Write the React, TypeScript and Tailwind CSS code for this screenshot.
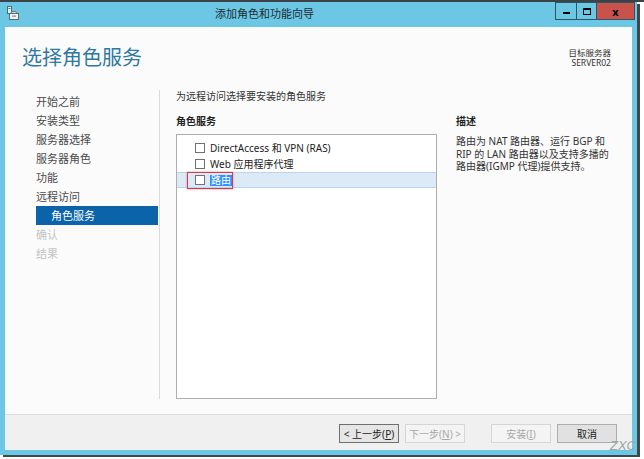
import React from "react";

const navItems = [
  { label: "开始之前", state: "done" },
  { label: "安装类型", state: "done" },
  { label: "服务器选择", state: "done" },
  { label: "服务器角色", state: "done" },
  { label: "功能", state: "done" },
  { label: "远程访问", state: "done" },
  { label: "角色服务", state: "active" },
  { label: "确认", state: "off" },
  { label: "结果", state: "off" },
];

function TitleIcon() {
  return (
    <svg width="12" height="14" viewBox="0 0 12 14" className="mt-[4px]">
      <rect x="0.5" y="0.5" width="4" height="7" fill="#e8f4fa" stroke="#3d6f8a" />
      <rect x="1.5" y="2" width="2" height="1" fill="#3d6f8a" />
      <path d="M3.5 7.5 L5 5.5 L9 5.5 L10.5 7.5 Z" fill="#cfd8dc" stroke="#5a6b73" strokeWidth="0.8" />
      <rect x="2.5" y="7.5" width="9" height="6" fill="#f2f4f5" stroke="#5a6b73" />
      <rect x="5" y="9.5" width="4" height="1.2" fill="#7a8a92" />
    </svg>
  );
}

function CheckBox() {
  return <span className="w-[10px] h-[10px] border border-[#707070] bg-white shrink-0" />;
}

function App() {
  return (
    <div className="w-[644px] h-[459px] bg-white overflow-hidden flex flex-col font-['Noto_Sans','Noto_Sans_CJK_SC',sans-serif] relative">
      <div className="h-[2px] bg-[#3b4348] shrink-0" />
      <div className="w-[637px] h-[453px] bg-[#6cc7e5] flex flex-col shadow-[3px_2px_0_#40484c]">
        {/* title bar */}
        <div className="h-[25px] flex items-start shrink-0 relative">
          <div className="pl-[7px]">
            <TitleIcon />
          </div>
          <div className="ml-[196px] mt-[5px] text-[11px] leading-[14px] text-[#1d2a30]">添加角色和功能向导</div>
          <div className="ml-auto mr-[2px] flex">
            <div className="w-[22px] h-[18px] border border-[#2e5566] flex items-end justify-center pb-[5px]">
              <span className="w-[7px] h-[2px] bg-black" />
            </div>
            <div className="w-[20px] h-[18px] border-y border-r border-[#2e5566] flex items-center justify-center">
              <span className="w-[8px] h-[7px] border border-black border-t-2" />
            </div>
            <div className="w-[38px] h-[18px] border-y border-r border-[#2e5566] bg-[#c9534b] flex items-center justify-center text-[11px] font-bold leading-none text-black">
              x
            </div>
          </div>
        </div>

        {/* body */}
        <div className="flex-1 px-[5px] pb-[5px] flex flex-col">
          <div className="flex-1 flex flex-col bg-[#fbfbfb]">
            <div className="h-[387px] flex flex-col">
              <div className="flex justify-between items-start pt-[19px]">
                <div className="pl-[17px] text-[20px] leading-[24px] text-[#2e78a4]">选择角色服务</div>
                <div className="pr-[21px] pt-[2px] text-right text-[8.5px] leading-[10px] text-[#333]">
                  <div>目标服务器</div>
                  <div>SERVER02</div>
                </div>
              </div>

              <div className="mt-[20px] h-[309px] flex">
                {/* nav */}
                <div className="w-[154px] pl-[31px] pr-[1px] pt-[2px] flex flex-col">
                  {navItems.map((item) =>
                    item.state === "active" ? (
                      <div key={item.label} className="h-[19px] leading-[19px] text-[11px] bg-[#0b63aa] text-white pl-[15px]">
                        {item.label}
                      </div>
                    ) : (
                      <div
                        key={item.label}
                        className={
                          item.state === "off"
                            ? "h-[19px] leading-[19px] text-[11px] text-[#c4c4c4]"
                            : "h-[19px] leading-[19px] text-[11px] text-[#4a4a4a]"
                        }
                      >
                        {item.label}
                      </div>
                    )
                  )}
                </div>
                <div className="w-[1px] bg-[#dadada]" />

                {/* main */}
                <div className="pl-[16px] flex">
                  <div className="w-[261px] flex flex-col">
                    <div className="text-[10px] leading-[12px] text-[#333]">为远程访问选择要安装的角色服务</div>
                    <div className="mt-[13px] text-[10px] leading-[12px] font-bold text-[#222]">角色服务</div>
                    <div className="mt-[7px] flex-1 border border-[#adadad] bg-white pt-[5px] text-[10px] text-[#222]">
                      <div className="h-[16px] flex items-center pl-[18px] gap-[5px]">
                        <CheckBox />
                        <span>DirectAccess 和 VPN (RAS)</span>
                      </div>
                      <div className="h-[16px] flex items-center pl-[18px] gap-[5px]">
                        <CheckBox />
                        <span>Web 应用程序代理</span>
                      </div>
                      <div className="h-[16px] flex items-center pl-[18px] gap-[5px] bg-[#dce9f7] border-y border-[#bcd4ee] relative">
                        <CheckBox />
                        <span className="bg-[#3390ff] text-white px-[1px] leading-[11px]">路由</span>
                        <div className="absolute left-[10px] top-[-1px] w-[46px] h-[17px] border-[1.5px] border-[#d23c4c] shadow-[0_0_2px_#e08a94]" />
                      </div>
                    </div>
                  </div>
                  <div className="ml-[19px] flex flex-col">
                    <div className="mt-[25px] text-[10px] leading-[12px] font-bold text-[#222]">描述</div>
                    <div className="mt-[8px] text-[10px] leading-[12.5px] text-[#333] whitespace-nowrap">
                      路由为 NAT 路由器、运行 BGP 和<br />
                      RIP 的 LAN 路由器以及支持多播的<br />
                      路由器(IGMP 代理)提供支持。
                    </div>
                  </div>
                </div>
              </div>
            </div>

            {/* footer */}
            <div className="flex-1 border-t border-[#dedede] bg-[#f0f0f0] flex items-start pt-[9px] pr-[15px] justify-end text-[10px]">
              <button className="w-[60px] h-[19px] border border-[#6f6f6f] bg-[#e6e6e6] text-[#222] leading-none">
                &lt; 上一步(<span className="underline">P</span>)
              </button>
              <button className="ml-[6px] w-[60px] h-[19px] border border-[#d5d5d5] bg-[#f4f4f4] text-[#a8a8a8] leading-none">
                下一步(<span className="underline">N</span>) &gt;
              </button>
              <button className="ml-[26px] w-[60px] h-[19px] border border-[#d5d5d5] bg-[#f4f4f4] text-[#a8a8a8] leading-none">
                安装(<span className="underline">I</span>)
              </button>
              <button className="ml-[6px] w-[60px] h-[19px] border border-[#acacac] bg-[#e1e1e1] text-[#222] leading-none">
                取消
              </button>
            </div>
          </div>
        </div>
      </div>
      <div className="absolute left-[610px] top-[439px] text-[13px] leading-[14px] italic text-[#9aa6aa] font-['Liberation_Sans',sans-serif]">
        ZXC
      </div>
    </div>
  );
}

export default App;
